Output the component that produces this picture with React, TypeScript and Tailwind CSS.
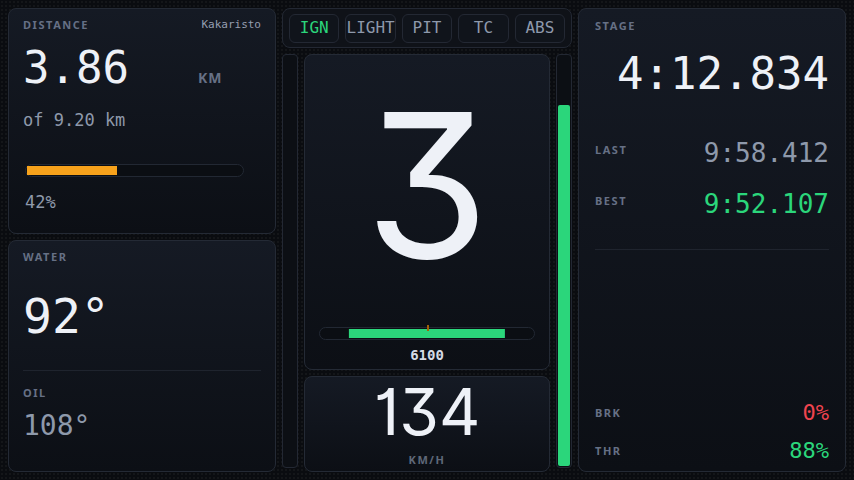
import type { ReactNode } from "react";

const mono = "font-['DejaVu_Sans_Mono',monospace]";
const display = "font-['Inter',sans-serif] [font-feature-settings:'cv01','cv09']";
const label = "font-['Noto_Sans',sans-serif] text-[11px] font-bold uppercase tracking-[0.14em] text-[#667085]";

function Card({ className = "", children }: { className?: string; children: ReactNode }) {
  return (
    <div
      className={`rounded-lg border border-[#242a35] bg-linear-to-b from-[#151a24] to-[#0c0f15] ${className}`}
    >
      {children}
    </div>
  );
}

function Toggle({ name, on }: { name: string; on?: boolean }) {
  return (
    <div
      className={`flex h-[29px] flex-1 items-center justify-center rounded-md border border-[#232833] bg-[#10141b] text-[16px] ${mono} ${
        on ? "text-[#2bd67b]" : "text-[#8e99ab]"
      }`}
    >
      {name}
    </div>
  );
}

function VBar({ pct }: { pct: number }) {
  return (
    <div className="flex w-4 flex-col justify-end overflow-hidden rounded border border-[#232833] bg-[#0c0f14] p-px">
      <div className="w-full rounded-[2px] bg-[#2bd67b]" style={{ height: `${pct}%` }} />
    </div>
  );
}

function Split({ name, value, tone, className = "" }: { name: string; value: string; tone: string; className?: string }) {
  return (
    <div className={`flex items-start justify-between ${className}`}>
      <span className={`mt-[2px] ${label}`}>{name}</span>
      <span className={`text-[26px] leading-none ${tone} ${mono}`}>{value}</span>
    </div>
  );
}

export default function App() {
  const rpm = 0.73;
  return (
    <div className="flex h-[480px] w-[854px] gap-1.5 bg-[#0a0c10] bg-[radial-gradient(#ffffff0a_1px,transparent_1px)] bg-[size:4px_4px] p-2 text-[#eef1f7]">
      {/* left column */}
      <div className="flex w-[268px] flex-col gap-1.5">
        <Card className="flex h-[226px] flex-col px-3.5 pt-2">
          <div className="flex items-center justify-between">
            <span className={label}>Distance</span>
            <span className={`text-[11px] text-[#959eb0] ${mono}`}>Kakaristo</span>
          </div>
          <div className="mt-3 flex items-baseline">
            <span className={`w-[175px] text-[44px] leading-none ${mono}`}>3.86</span>
            <span className="font-['Noto_Sans',sans-serif] text-[14px] font-bold tracking-[0.06em] text-[#667085]">
              KM
            </span>
          </div>
          <div className={`mt-[18px] text-[17px] text-[#8e99ab] ${mono}`}>of 9.20 km</div>
          <div className="mt-[31px] ml-[2px] h-[13px] w-[219px] rounded-full border border-[#222833] bg-[#0b0e13] p-px">
            <div className="h-full bg-[#f7a21b]" style={{ width: "42%" }} />
          </div>
          <div className={`mt-[13px] ml-[2px] text-[17px] text-[#8e99ab] ${mono}`}>42%</div>
        </Card>

        <Card className="flex flex-1 flex-col px-3.5 pt-2">
          <span className={label}>Water</span>
          <div className={`mt-[26px] text-[48px] leading-none ${mono}`}>92°</div>
          <div className="mt-[30px] h-px bg-[#1f242e]" />
          <span className={`mt-[14px] ${label}`}>Oil</span>
          <div className={`mt-[11px] text-[28px] leading-none text-[#8e99ab] ${mono}`}>108°</div>
        </Card>
      </div>

      {/* middle column */}
      <div className="flex w-[290px] flex-col gap-1.5">
        <div className="flex h-10 items-center gap-1.5 rounded-lg border border-[#232833] bg-[#0f1218] px-1.5">
          <Toggle name="IGN" on />
          <Toggle name="LIGHT" />
          <Toggle name="PIT" />
          <Toggle name="TC" />
          <Toggle name="ABS" />
        </div>
        <div className="flex flex-1 gap-1.5">
          <div className="mb-1 flex">
            <VBar pct={0} />
          </div>
          <div className="flex flex-1 flex-col gap-1.5">
            <Card className="flex flex-1 flex-col items-center px-3.5 pb-[3px]">
              <div className={`mt-[30px] text-[200px] leading-none ${display}`}>3</div>
              <div className="mt-auto w-full">
                <div className="relative h-[13px] w-full rounded-full border border-[#222833] bg-[#0b0e13]">
                  <div
                    className="absolute top-px bottom-px left-1/2 -translate-x-1/2 bg-[#2bd67b]"
                    style={{ width: `${rpm * 100}%` }}
                  />
                  <div className="absolute -top-[3px] left-1/2 h-[6px] w-[2px] bg-[#a16207]" />
                </div>
                <div className={`mt-[5px] text-center text-[14px] font-bold text-[#d5dbe5] ${mono}`}>6100</div>
              </div>
            </Card>
            <Card className="flex h-24 flex-col items-center pt-[3px]">
              <div className={`text-[64px] leading-none ${display}`}>134</div>
              <div className="mt-[8px] font-['Noto_Sans',sans-serif] text-[11px] font-bold tracking-[0.14em] text-[#5f6879]">
                KM/H
              </div>
            </Card>
          </div>
          <div className="mb-1 flex">
            <VBar pct={88} />
          </div>
        </div>
      </div>

      {/* right column */}
      <Card className="flex w-[268px] flex-col px-4 pt-[9px]">
        <span className={label}>Stage</span>
        <div className={`mt-[17px] text-right text-[44px] leading-none ${mono}`}>4:12.834</div>
        <Split name="Last" value="9:58.412" tone="text-[#8e99ab]" className="mt-[44px]" />
        <Split name="Best" value="9:52.107" tone="text-[#2bd67b]" className="mt-[25px]" />
        <div className="mt-[32px] h-px bg-[#1f242e]" />
        <div className="mt-auto flex items-center justify-between">
          <span className={label}>Brk</span>
          <span className={`text-[22px] leading-none text-[#f0444f] ${mono}`}>0%</span>
        </div>
        <div className="mt-[16px] mb-[9px] flex items-center justify-between">
          <span className={label}>Thr</span>
          <span className={`text-[22px] leading-none text-[#2bd67b] ${mono}`}>88%</span>
        </div>
      </Card>
    </div>
  );
}
